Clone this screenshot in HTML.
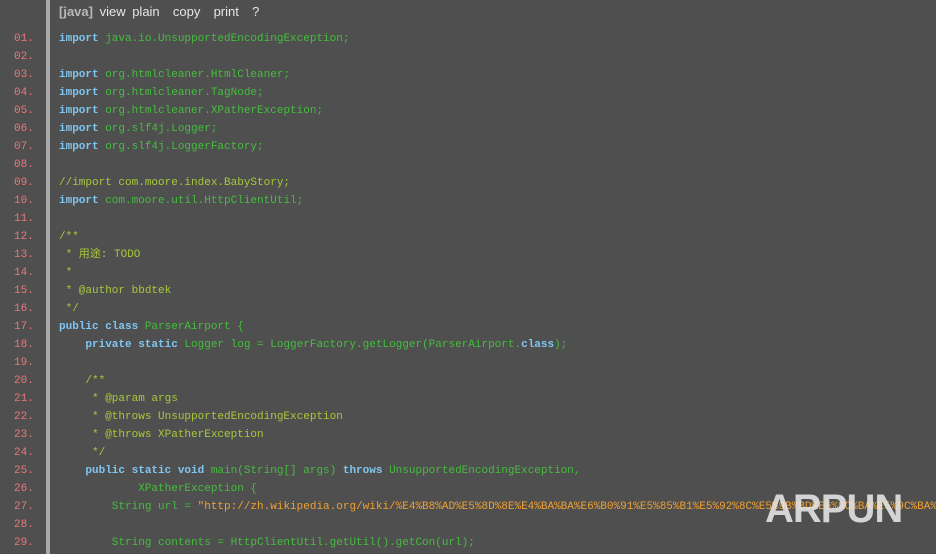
<!DOCTYPE html>
<html><head><meta charset="utf-8"><style>
body{margin:0;width:936px;height:554px;background:#4f4f4f;overflow:hidden;position:relative;font-family:"Liberation Mono","Noto Sans CJK SC",monospace;font-size:11px}
.bar{position:absolute;left:46px;top:0;width:4px;height:554px;background:#a9a9a9}
.hdr{position:absolute;left:59px;top:4px;font-family:"Liberation Sans",sans-serif;font-size:13px;color:#e6e6e6;word-spacing:3px}
.hdr b{color:#b9b9b9}
.ln{position:absolute;left:14px;color:#e8787a;height:18px;line-height:18px;margin-top:1px}
.c{position:absolute;left:59px;white-space:pre;color:#45bd3e;height:18px;line-height:18px;margin-top:1px}
.k{color:#7fc6f0;font-weight:bold}
.m{color:#a8c83a}
.s{color:#f0a030}
.wm{position:absolute;left:765px;top:487px;font-family:"Liberation Sans",sans-serif;font-weight:bold;font-size:40px;color:rgba(235,235,235,.85);letter-spacing:-1px}
</style></head><body>
<div class="bar"></div>
<div class="hdr"><b>[java]</b> view plain&nbsp; copy&nbsp; print&nbsp; ?</div>
<div class="ln" style="top:29px">01.</div><div class="c" style="top:29px"><span class="k">import</span> java.io.UnsupportedEncodingException;</div>
<div class="ln" style="top:47px">02.</div>
<div class="ln" style="top:65px">03.</div><div class="c" style="top:65px"><span class="k">import</span> org.htmlcleaner.HtmlCleaner;</div>
<div class="ln" style="top:83px">04.</div><div class="c" style="top:83px"><span class="k">import</span> org.htmlcleaner.TagNode;</div>
<div class="ln" style="top:101px">05.</div><div class="c" style="top:101px"><span class="k">import</span> org.htmlcleaner.XPatherException;</div>
<div class="ln" style="top:119px">06.</div><div class="c" style="top:119px"><span class="k">import</span> org.slf4j.Logger;</div>
<div class="ln" style="top:137px">07.</div><div class="c" style="top:137px"><span class="k">import</span> org.slf4j.LoggerFactory;</div>
<div class="ln" style="top:155px">08.</div>
<div class="ln" style="top:173px">09.</div><div class="c m" style="top:173px">//import com.moore.index.BabyStory;</div>
<div class="ln" style="top:191px">10.</div><div class="c" style="top:191px"><span class="k">import</span> com.moore.util.HttpClientUtil;</div>
<div class="ln" style="top:209px">11.</div>
<div class="ln" style="top:227px">12.</div><div class="c m" style="top:227px">/**</div>
<div class="ln" style="top:245px">13.</div><div class="c m" style="top:245px"> * 用途: TODO</div>
<div class="ln" style="top:263px">14.</div><div class="c m" style="top:263px"> *</div>
<div class="ln" style="top:281px">15.</div><div class="c m" style="top:281px"> * @author bbdtek</div>
<div class="ln" style="top:299px">16.</div><div class="c m" style="top:299px"> */</div>
<div class="ln" style="top:317px">17.</div><div class="c" style="top:317px"><span class="k">public class</span> ParserAirport {</div>
<div class="ln" style="top:335px">18.</div><div class="c" style="top:335px">    <span class="k">private static</span> Logger log = LoggerFactory.getLogger(ParserAirport.<span class="k">class</span>);</div>
<div class="ln" style="top:353px">19.</div>
<div class="ln" style="top:371px">20.</div><div class="c m" style="top:371px">    /**</div>
<div class="ln" style="top:389px">21.</div><div class="c m" style="top:389px">     * @param args</div>
<div class="ln" style="top:407px">22.</div><div class="c m" style="top:407px">     * @throws UnsupportedEncodingException</div>
<div class="ln" style="top:425px">23.</div><div class="c m" style="top:425px">     * @throws XPatherException</div>
<div class="ln" style="top:443px">24.</div><div class="c m" style="top:443px">     */</div>
<div class="ln" style="top:461px">25.</div><div class="c" style="top:461px">    <span class="k">public static void</span> main(String[] args) <span class="k">throws</span> UnsupportedEncodingException,</div>
<div class="ln" style="top:479px">26.</div><div class="c" style="top:479px">            XPatherException {</div>
<div class="ln" style="top:497px">27.</div><div class="c" style="top:497px">        String url = <span class="s">"http://zh.wikipedia.org/wiki/%E4%B8%AD%E5%8D%8E%E4%BA%BA%E6%B0%91%E5%85%B1%E5%92%8C%E5%9B%BD%E6%9C%BA%E5%9C%BA%"</span></div>
<div class="ln" style="top:515px">28.</div>
<div class="ln" style="top:533px">29.</div><div class="c" style="top:533px">        String contents = HttpClientUtil.getUtil().getCon(url);</div>
<div class="wm">ARPUN</div>
</body></html>
